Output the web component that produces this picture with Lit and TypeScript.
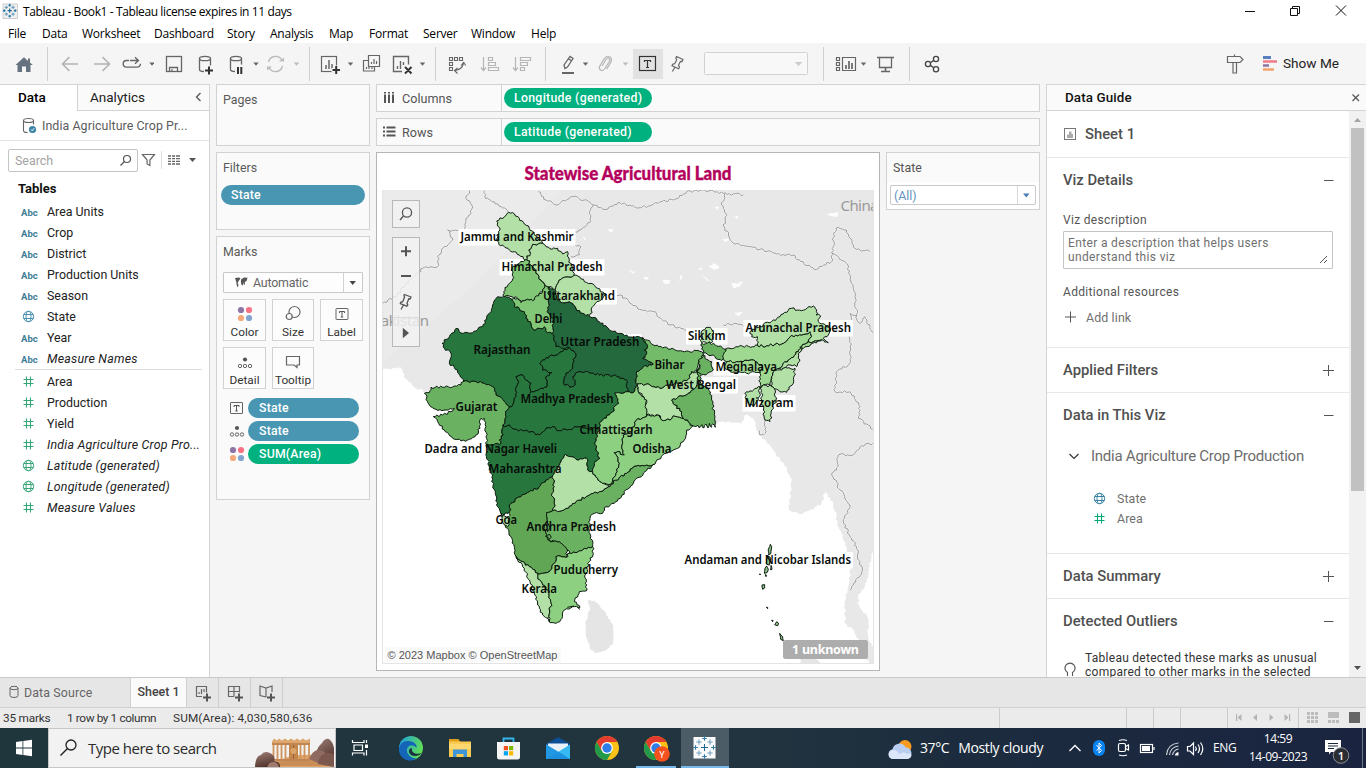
import { LitElement, html, svg, css } from "lit";
import { customElement } from "lit/decorators.js";

type Pt = [number, number];

/* ---------- geometry helpers ---------- */

const parse = (s: string): Pt[] =>
  s.trim().split(/\s+/).map((p) => p.split(",").map(Number) as Pt);

/* Deterministic coastline noise: an edge gives the same wiggle from either end. */
const wiggle = (a: Pt, b: Pt, amp: number): Pt[] => {
  const flip = a[0] > b[0] || (a[0] === b[0] && a[1] > b[1]);
  const [p, q] = flip ? [b, a] : [a, b];
  const len = Math.hypot(q[0] - p[0], q[1] - p[1]);
  const n = Math.max(1, Math.round(len / 6));
  const out: Pt[] = [];
  let seed = p[0] * 7.13 + p[1] * 3.71 + q[0] * 1.37 + q[1] * 5.91;
  for (let i = 1; i < n; i++) {
    seed = (seed * 16.807 + 11.3) % 997;
    const off = (seed / 997 - 0.5) * 2 * amp;
    const t = i / n;
    out.push([
      p[0] + (q[0] - p[0]) * t + (-(q[1] - p[1]) / len) * off,
      p[1] + (q[1] - p[1]) * t + ((q[0] - p[0]) / len) * off,
    ]);
  }
  return flip ? out.reverse() : out;
};

const outline = (s: string, closed: boolean, amp = 4): string => {
  const pts = parse(s);
  const all: Pt[] = [];
  const last = closed ? pts.length : pts.length - 1;
  for (let i = 0; i < last; i++) {
    const a = pts[i];
    const b = pts[(i + 1) % pts.length];
    all.push(a, ...wiggle(a, b, amp));
  }
  if (!closed) all.push(pts[pts.length - 1]);
  return "M" + all.map((p) => p[0].toFixed(1) + " " + p[1].toFixed(1)).join("L") + (closed ? "Z" : "");
};

/* ---------- map data ---------- */

const SEA =
  "18,658 75,655 85,685 120,715 150,725 250,700 500,900 800,850 950,826 1017,830 1030,815 1062,815 1097,822 1107,795 1132,805 1142,840 1172,880 1212,925 1242,980 1247,1020 1237,1080 1272,1092 1302,1080 1337,1060 1347,1025 1372,1060 1387,1130 1412,1190 1422,1260 1417,1310 1407,1350 1407,1420 1432,1440 1462,1500 1480,1545 18,1545";
const GULF = "1500,1180 1485,1215 1480,1260 1465,1310 1447,1340 1450,1370 1475,1400 1480,1470 1500,1500";
const LANKA =
  "635,1350 655,1352 690,1390 712,1430 712,1480 690,1500 660,1510 645,1500 630,1460 628,1420 642,1375";
const SUMATRA = "1272,1545 1275,1520 1320,1528 1345,1545";

const BORDERS = [
  "280,122 270,145 287,165 285,190 270,205 268,230 262,240 215,240 230,270 205,290 188,315 185,350 140,355 120,375 90,400 60,440 20,460",
  "325,122 328,145 355,155 375,170 398,187",
  "487,125 510,150 540,165 590,140 625,150 652,165 640,190 645,215 615,240 595,250 590,280 615,290 610,315 585,320",
  "652,165 690,178 732,158 777,172 822,168 852,155 892,150 932,125 1002,122 1042,130 1102,135",
  "1047,130 1037,165 1050,190 1044,230 1072,280 1132,292 1202,312 1252,315 1287,345 1322,358 1342,345 1367,335 1372,290 1372,250 1387,232 1412,240 1422,265 1437,295 1482,305",
  "1367,310 1412,340 1422,375 1437,440 1442,500 1422,490 1424,600 1422,640 1382,665 1377,725 1422,725 1452,770 1447,805 1490,838",
  "1437,500 1452,520 1467,500 1490,548",
  "690,430 732,435 792,478 832,485 882,525 932,540",
  "1042,525 1080,520 1122,535",
  "1490,880 1452,890 1432,915 1387,915 1382,960 1367,970 1392,1020 1422,1065 1402,1115 1422,1160 1442,1190 1447,1230 1460,1260 1422,1320",
  "1167,810 1167,850 1152,855 1150,842",
];

const LAKES = [
  "620,260 633,268 625,271", "695,238 713,236 707,248", "1072,200 1086,196 1084,208", "1353,192 1372,190 1388,186 1384,200 1366,198",
  "757,361 780,366 770,371", "860,390 884,390 880,401 866,402", "906,400 914,374 920,380", "975,374 999,390 994,394",
  "997,350 1014,338 1031,352 1014,361", "1065,400 1084,402 1101,394 1090,410 1072,415", "802,382 818,382 812,390",
  "1037,268 1060,266 1050,277", "966,354 979,352 976,361", "1075,488 1098,486 1087,500", "50,655 76,652 74,662 58,664", "1015,172 1030,170 1026,180",
];

const PALE = "#b3e0a6";
const DEEP = "#27763d";
const MID = "#6ab161";
const SOFT = "#8ed082";

const STATES: [string, string][] = [
  [DEEP, "408,448 385,437 365,440 350,465 340,490 320,530 290,548 262,550 240,535 220,560 198,580 205,595 225,610 220,640 245,660 258,685 262,695 300,695 325,700 350,710 360,735 385,755 400,770 410,765 420,740 425,690 420,680 440,675 465,700 462,730 480,722 512,712 510,680 528,668 500,660 492,640 500,630 550,608 580,592 540,590 528,550 515,548 505,530 490,535 480,540 470,535 465,520 450,505 445,485 430,475 415,470"],
  [DEEP, "580,592 600,612 590,640 585,660 570,670 563,700 582,712 597,705 590,680 600,668 640,668 670,675 700,675 730,680 755,695 755,725 735,730 715,730 728,760 700,795 675,815 665,835 640,838 610,830 580,838 550,842 530,830 510,835 495,850 480,855 465,845 440,842 415,838 400,825 385,830 380,825 390,800 388,785 400,770 410,765 420,740 425,690 420,680 440,675 465,700 462,730 480,722 512,712 510,680 528,668 500,660 492,640 500,630 550,608"],
  ["#24693d", "520,410 540,425 545,450 560,458 580,455 600,475 620,490 640,497 670,515 700,540 735,550 770,562 800,565 815,590 805,600 812,612 800,625 832,642 802,650 782,665 780,685 784,705 772,728 755,725 755,695 730,680 700,675 670,675 640,668 600,668 590,680 597,705 582,712 563,700 570,670 585,660 590,640 600,612 580,592 560,595 540,590 528,550 533,520 530,505 517,490 517,455"],
  [MID, "262,695 300,695 325,700 350,710 360,735 385,755 400,770 388,785 390,800 380,825 382,855 370,870 375,880 360,880 345,885 332,885 330,860 330,830 325,805 315,805 312,835 300,855 275,870 255,873 230,865 205,840 185,815 172,800 200,795 225,785 235,775 210,780 180,778 160,765 145,730 160,728 165,712 200,712 235,708 255,705"],
  [DEEP, "380,825 385,830 400,825 415,838 440,842 465,845 480,855 495,850 510,835 530,830 550,842 580,838 610,830 640,838 665,835 660,865 660,900 672,925 655,940 650,965 640,965 632,940 632,925 600,928 568,913 555,935 545,955 530,977 510,990 490,1010 460,1025 435,1040 405,1060 400,1085 385,1095 375,1092 365,1070 358,1030 345,970 335,930 330,885 345,885 360,880 375,880 370,870 382,855"],
  ["#60a655", "530,977 535,1010 528,1030 535,1060 530,1082 512,1088 515,1115 505,1130 510,1160 525,1175 550,1175 575,1200 570,1222 540,1220 535,1240 520,1265 500,1270 485,1270 460,1250 440,1235 420,1220 415,1190 405,1160 395,1135 385,1120 398,1100 400,1085 405,1060 435,1040 460,1025 490,1010 510,990"],
  [PALE, "375,1092 385,1098 398,1100 395,1130 385,1125 378,1105"],
  [MID, "512,1088 530,1082 545,1085 570,1075 590,1060 610,1050 640,1035 670,1025 690,1015 705,1002 732,980 752,970 777,948 792,948 812,945 837,942 807,965 772,1000 738,1035 715,1060 690,1070 680,1090 655,1090 642,1105 640,1140 650,1190 620,1200 600,1208 580,1210 575,1200 550,1175 525,1175 510,1160 505,1130 515,1115"],
  [PALE, "568,913 600,928 632,925 632,940 640,965 650,965 665,985 680,1000 700,1005 690,1015 670,1025 640,1035 610,1050 590,1060 570,1075 545,1085 530,1082 535,1060 528,1030 535,1010 530,977 545,955 555,935"],
  [SOFT, "650,1190 652,1210 640,1235 630,1270 628,1300 632,1322 610,1325 595,1355 612,1372 590,1370 565,1380 558,1405 540,1420 522,1418 518,1400 525,1360 515,1320 500,1305 485,1280 485,1270 500,1270 520,1265 535,1240 540,1220 570,1222 580,1210 600,1208 620,1200"],
  [PALE, "420,1220 440,1235 460,1250 485,1270 485,1280 500,1305 515,1320 525,1360 518,1400 520,1416 500,1395 485,1365 475,1330 460,1290 440,1250 425,1230"],
  [SOFT, "715,730 735,730 755,725 772,728 784,705 787,725 807,745 810,770 812,795 805,802 780,812 765,845 742,855 737,890 745,915 725,905 715,908 730,940 720,970 705,1002 680,1000 665,985 650,965 655,940 672,925 660,900 660,865 665,835 675,815 700,795 728,760"],
  [SOFT, "812,795 850,798 857,810 882,810 892,797 922,805 950,828 932,840 925,870 905,895 870,910 840,935 837,942 812,945 792,948 777,948 752,970 732,980 705,1002 720,970 730,940 715,908 725,905 745,915 737,890 742,855 765,845 780,812 805,802"],
  ["#73bb69", "800,562 832,585 882,598 932,603 977,605 982,615 967,640 962,665 947,665 937,688 907,700 882,705 852,715 822,705 784,702 780,685 782,665 802,650 832,642 800,625 812,612 805,600 815,590"],
  [PALE, "784,702 822,705 852,715 882,705 907,700 937,688 947,665 964,665 964,690 957,715 932,735 887,750 897,765 917,785 922,805 892,797 882,810 857,810 847,795 812,795 807,770 812,750 787,725"],
  [MID, "887,750 932,735 957,715 967,690 964,665 972,645 967,630 982,615 997,630 1007,635 1012,660 994,670 972,680 977,705 997,715 1007,750 1017,800 1018,832 1010,822 1006,832 1000,820 996,834 990,822 984,834 978,824 970,834 966,826 952,828 922,805 917,785 897,765"],
  [MID, "977,580 1012,580 1050,597 1047,615 1037,632 1017,620 982,608"],
  [PALE, "980,540 1002,532 1012,545 1010,575 977,578"],
  ["#9fd991", "1050,597 1080,590 1130,590 1145,587 1172,587 1222,580 1242,560 1277,555 1302,545 1307,560 1292,580 1277,590 1267,605 1237,630 1210,655 1197,660 1187,680 1182,705 1162,705 1152,715 1152,670 1157,645 1132,630 1082,635 1052,635 1042,625"],
  ["#a2da94", "1052,635 1082,635 1132,630 1157,645 1152,668 1112,670 1062,665 1046,655"],
  [PALE, "1127,560 1122,545 1152,530 1192,510 1212,500 1247,475 1277,482 1312,468 1322,480 1320,495 1334,498 1327,515 1352,530 1364,535 1357,555 1342,565 1357,578 1337,570 1312,575 1292,580 1307,560 1302,545 1277,555 1242,560 1222,580 1172,587 1145,587 1144,560"],
  ["#a2da94", "1337,570 1312,575 1292,580 1277,590 1270,605 1285,592 1310,580"],
  [PALE, "1272,590 1267,605 1237,630 1210,655 1222,655 1242,645 1262,650 1272,630 1267,610 1277,600"],
  [PALE, "1197,660 1222,655 1257,655 1252,700 1232,727 1207,720 1184,710 1187,680"],
  [PALE, "1157,710 1182,705 1197,720 1200,750 1187,780 1182,815 1167,810 1162,780 1157,750"],
  [PALE, "1107,730 1137,715 1152,710 1150,740 1132,770 1117,760"],
  ["#82c677", "447,330 452,325 465,345 480,370 495,390 505,402 500,425 485,440 470,452 455,448 435,458 425,445 408,440 385,440 383,425 400,400 413,382 408,355 430,340"],
  ["#82c677", "408,448 425,445 435,458 455,448 470,452 500,425 505,402 520,410 517,455 517,490 530,505 533,520 528,550 515,548 505,530 490,535 480,540 470,535 465,520 450,505 445,485 430,475 415,470"],
  [PALE, "500,280 510,290 528,298 545,295 560,312 575,305 580,330 595,370 585,382 565,382 550,390 538,418 520,410 505,402 495,390 480,370 465,345 452,325 463,310 458,300 470,283"],
  [PALE, "362,213 385,200 398,187 410,188 430,205 445,222 460,235 480,258 500,280 470,283 458,300 463,310 447,330 430,315 415,305 400,300 385,290 368,283 362,255 372,240"],
  [PALE, "538,418 550,390 565,382 585,382 600,375 625,395 645,400 665,415 690,435 675,450 655,465 640,497 620,490 600,475 580,455 560,458 545,450 540,425"],
];

const ISLANDS = [
  "1183,1183 1187,1190 1185,1210 1178,1215 1177,1198", "1178,1218 1184,1225 1180,1245 1172,1243 1172,1228", "1172,1248 1177,1258 1173,1268 1165,1270 1167,1255",
  "1185,1246 1188,1258 1184,1260", "1158,1305 1166,1304 1166,1314 1160,1318", "1168,1274 1171,1275 1170,1280", "1150,1272 1153,1272 1153,1275",
  "1171,1372 1175,1372 1175,1376", "1187,1411 1191,1411 1190,1415", "1196,1424 1202,1415 1208,1420 1205,1427", "1211,1450 1220,1460 1222,1472 1214,1468",
];

/* text, left, baseline, width, backed by a white plate */
const LABELS: [string, number, number, number, boolean][] = [
  ["Jammu and Kashmir", 460.5, 241, 113, true],
  ["Himachal Pradesh", 501.5, 271, 101, true],
  ["Uttarakhand", 543, 300, 72, true],
  ["Delhi", 534.5, 323, 28, false],
  ["Uttar Pradesh", 560.5, 346, 79, true],
  ["Rajasthan", 473.5, 354, 57, false],
  ["Bihar", 654.5, 369, 30, false],
  ["Sikkim", 688, 340, 37.5, true],
  ["Arunachal Pradesh", 745.5, 332, 105.5, true],
  ["Meghalaya", 715.5, 371, 61.5, true],
  ["West Bengal", 666, 389, 70, true],
  ["Mizoram", 744.5, 407, 49, true],
  ["Gujarat", 455.5, 411, 42, false],
  ["Madhya Pradesh", 520.5, 403, 93, false],
  ["Chhattisgarh", 579.5, 434, 73, false],
  ["Odisha", 632.5, 453, 39, false],
  ["Dadra and Nagar Haveli", 424.5, 453, 132.5, false],
  ["Maharashtra", 488.5, 473, 73, false],
  ["Goa", 495.5, 524, 21.5, false],
  ["Andhra Pradesh", 526.5, 531, 89.5, false],
  ["Puducherry", 553.5, 574, 64.5, false],
  ["Kerala", 521.5, 593, 35.5, false],
  ["Andaman and Nicobar Islands", 684.5, 564, 166.5, true],
];

/* A bar slice: artwork is authored in window coordinates. */
const slice = (x: number, y: number, w: number, h: number, art: unknown) =>
  html`<svg class="slice" width=${w} height=${h} viewBox="${x} ${y} ${w} ${h}">${art}</svg>`;

const drop = (x: number, y: number, c = "#666") => svg`<path d="M${x - 2.7} ${y - 1.5}h5.4l-2.7 3.2z" fill=${c}/>`;

const globe = (c: string) => html`<svg width="13" height="13" viewBox="0 0 13 13" fill="none" stroke=${c}>
  <circle cx="6.5" cy="6.5" r="5.2"/><ellipse cx="6.5" cy="6.5" rx="2.5" ry="5.2"/><path d="M1.8 4.5h9.4M1.8 8.5h9.4"/></svg>`;
const hash = (c: string) => html`<svg width="13" height="13" viewBox="0 0 13 13" fill="none" stroke=${c} stroke-width="1.1">
  <path d="M4.5 1.5v10M8.5 1.5v10M1.5 4.5h10M1.5 8.5h10"/></svg>`;

const spark = (cx: number, cy: number, s: number, k = 0.12) => {
  const plus = (x: number, y: number, r: number, c: string) =>
    svg`<path d="M${x - r} ${y}h${2 * r}M${x} ${y - r}v${2 * r}" stroke=${c} stroke-width=${s * k}/>`;
  return svg`${plus(cx, cy, s * 0.3, "#1f6a94")}
    ${[[0, -0.78], [0, 0.78], [-0.78, 0], [0.78, 0]].map(([a, b]) => plus(cx + a * s, cy + b * s, s * 0.2, "#2f7ba5"))}
    ${[[-0.48, -0.48], [0.48, -0.48], [-0.48, 0.48], [0.48, 0.48]].map(([a, b]) => plus(cx + a * s, cy + b * s, s * 0.23, "#6d9fbd"))}`;
};

const dots = (x: number, y: number) => svg`
  <circle cx=${x - 4} cy=${y - 4} r="3.1" fill="#8d74a5"/><circle cx=${x + 4} cy=${y - 4} r="3.1" fill="#fb7185"/>
  <circle cx=${x - 4} cy=${y + 4} r="3.1" fill="#f5a97b"/><circle cx=${x + 4} cy=${y + 4} r="3.1" fill="#82a5cf"/>`;
const detail = svg`<circle cx="8" cy="3" r="2.1" fill="#555"/><g fill="none" stroke="#666"><circle cx="3" cy="9.5" r="1.7"/><circle cx="8" cy="9.5" r="1.7"/><circle cx="13" cy="9.5" r="1.7"/></g>`;
const label = svg`<rect x="1.5" y=".5" width="12" height="11" rx=".5" fill="none" stroke="#666"/><path d="M5 5V3.5h5V5M7.500 3.500v5.500M6.300 9h2.400" fill="none" stroke="#555"/>`;

const chrome = (cx: number, cy: number) => svg`<g transform="translate(${cx} ${cy})">
  <circle r="12" fill="#fbc116"/>
  <path d="M-10.400 -6A12 12 0 0 1 10.400 -6L0 -6L-5.200 3z" fill="#e33b2e"/>
  <path d="M-10.400 -6A12 12 0 0 0 0 12L5.200 3L-5.200 3z" fill="#229a4a"/>
  <circle r="5.900" fill="#fff"/><circle r="4.700" fill="#2f7de9"/></g>`;

const ABC = "abc", GEO = "geo", NUM = "num";
const DIMENSIONS: [string, string, boolean?][] = [
  [ABC, "Area Units"], [ABC, "Crop"], [ABC, "District"], [ABC, "Production Units"],
  [ABC, "Season"], [GEO, "State"], [ABC, "Year"], [ABC, "Measure Names", true],
];
const MEASURES: [string, string, boolean?][] = [
  [NUM, "Area"], [NUM, "Production"], [NUM, "Yield"], [NUM, "India Agriculture Crop Pro...", true],
  [GEO, "Latitude (generated)", true], [GEO, "Longitude (generated)", true], [NUM, "Measure Values", true],
];

/* ---------- map ---------- */

@customElement("crop-map")
class CropMap extends LitElement {
  static styles = css`
    :host { display: block; }
    svg { display: block; }
    text { font-family: "Noto Sans", "Open Sans", sans-serif; }
    .name { font-size: 12px; font-weight: 600; fill: #060a08; }
    .place { font-size: 15px; fill: #999; }
    .credit { font: 11.4px "Liberation Sans", Arial, sans-serif; fill: #555; }
    .unknown { font-size: 12.5px; font-weight: 700; fill: #fff; }
  `;
  render() {
    return html`<svg width="492" height="474" viewBox="382 190 492 474">
      <rect x="382" y="190" width="492" height="474" fill="#e8e8e8"/>
      <g transform="translate(376 150) scale(.33333)">
        <path d="M18 120H560L300 400 18 640Z" fill="#ebebeb"/>
        ${[SEA, GULF].map((s) => svg`<path d=${outline(s, true, 4)} fill="#fff"/>`)}
        ${[LANKA, SUMATRA].map((s) => svg`<path d=${outline(s, true, 2)} fill="#e5e5e5"/>`)}
        ${LAKES.map((s) => svg`<path d=${outline(s, true, 2)} fill="#fdfdfd"/>`)}
        ${BORDERS.map((s) => svg`<path d=${outline(s, false, 4)} fill="none" stroke="#f4f4f4" stroke-width="6"/>`)}
        ${BORDERS.map((s) => svg`<path d=${outline(s, false, 4)} fill="none" stroke="#939393" stroke-width="2.8"/>`)}
      </g>
      <text class="place" x="840.5" y="211" textLength="38">China</text>
      <text class="place" x="372" y="326" textLength="57">Pakistan</text>
      ${LABELS.filter((l) => l[4]).map(([, x, y, w]) => svg`<rect x=${x - 2} y=${y - 12} width=${w + 4} height="16.5" fill="#fff"/>`)}
      <g transform="translate(376 150) scale(.33333)" stroke="#0b1a0e" stroke-width="3" stroke-linejoin="round">
        ${STATES.map(([c, s]) => svg`<path d=${outline(s, true)} fill=${c}/>`)}
        ${ISLANDS.map((s) => svg`<path d=${outline(s, true, 1)} fill="#8bbf86"/>`)}
        <path d="M512 1160l8 -8 6 10 -8 6 6 8 8 -6M516 1120l6 14 -8 12M972 645l-8 20 12 8M574 1372l20 -4M604 1372l8 6" fill="none"/>
      </g>
      ${LABELS.map(([t, x, y, w]) => svg`<text class="name" x=${x} y=${y} textLength=${w} lengthAdjust="spacingAndGlyphs">${t}</text>`)}
      <g fill="#f3f3f3" fill-opacity=".8" stroke="#b8b8b8">
        <rect x="392.5" y="200.5" width="27" height="27"/><rect x="392.5" y="237.5" width="27" height="109"/>
      </g>
      <path d="M393 317.500h26" stroke="#ddd"/>
      <g fill="none" stroke="#555" stroke-width="1.3">
        <circle cx="407" cy="212.5" r="4.600"/><path d="M403.500 216l-3.500 4"/>
        <path d="M401 251.200h10M406 246.200v10M401 276h10" stroke-width="2"/>
        <path d="M404.500 294.500l6.500 2.500-1 2-1.200-.2-1.800 4.500.8 1.900-1 1-6.500-2.500.4-1.400 2-.6 1.900-4.700-.7-1.500zM403.500 305l-2.500 4.500"/>
      </g>
      <path d="M402.800 327.800v10.400l6.200-5.200z" fill="#555"/>
      <rect x="385" y="647" width="176" height="15" fill="#fafafa"/>
      <text class="credit" x="387.500" y="659" textLength="170" lengthAdjust="spacingAndGlyphs">© 2023 Mapbox © OpenStreetMap</text>
      <rect x="783" y="640" width="85" height="19" rx="2.5" fill="#adadad"/>
      <text class="unknown" x="792" y="654" textLength="67">1 unknown</text>
      <path d="M382.500 190V663.500H873.500V190" fill="none" stroke="#e4e4e4"/>
    </svg>`;
  }
}

/* ---------- application ---------- */

@customElement("app-root")
class AppRoot extends LitElement {
  static styles = css`
    :host { display: flex; flex-direction: column; width: 1366px; height: 768px; overflow: hidden; background: #fff;
      font: 12.4px Roboto, "Open Sans", sans-serif; color: #333; }
    * { box-sizing: border-box; }
    svg { display: block; flex: none; }
    span { white-space: nowrap; }
    .segoe { font-family: "Open Sans", "Noto Sans", sans-serif; }

    .title { height: 24px; display: flex; align-items: center; color: #000; font-size: 12px; letter-spacing: -0.39px; }
    .title .text { flex: 1; padding: 0 0 2px 5px; }
    .menu { height: 19px; display: grid; color: #000; font-size: 12px; letter-spacing: -0.22px; padding-left: 8px; align-items: center;
      grid-template-columns: 34px 40px 72px 73px 43px 59px 40px 54px 48px 60px 40px; }
    .toolbar { height: 41px; display: flex; background: #f5f5f5; }
    .showme { width: 83px; padding-left: 3px; line-height: 41px; font-size: 13.6px; color: #222; }

    .main { height: 593px; display: flex; background: #f5f5f5; }
    .data { width: 210px; background: #fff; border-right: 1px solid #d4d4d4; border-top: 1px solid #d4d4d4; }
    .tabs { display: flex; height: 26px; line-height: 25px; color: #222; font-size: 13.5px; }
    .tabs .on { width: 77px; padding-left: 18px; font-weight: 500; color: #000; }
    .tabs .off { flex: 1; display: flex; justify-content: space-between; padding-left: 12px; background: #fafafa; border: solid #d4d4d4; border-width: 0 0 1px 1px; }
    .source { height: 30px; display: flex; align-items: center; border-bottom: 1px solid #e2e2e2; color: #5c5c5c; font-size: 12.4px; letter-spacing: 0.07px; }
    .find { display: flex; padding: 8px 0 0 8px; height: 36px; }
    .search { width: 130px; height: 23px; border: 1px solid #c4c4c4; border-radius: 2px; display: flex; align-items: center; padding-left: 6px; color: #a3a3a3; justify-content: space-between; }
    .heading { padding-left: 18px; height: 24px; line-height: 23px; font-weight: 700; font-size: 13px; color: #111; }
    .field { display: grid; grid-template-columns: 16px 1fr; column-gap: 10px; padding-left: 21px; height: 21px; align-items: center; color: #222; }
    .field .abc { font-size: 9.5px; font-weight: 700; color: #3f7d96; padding-top: 2px; }
    .field .glyph { padding-left: 1px; }
    .it { font-style: italic; letter-spacing: 0.22px; }
    .rule { height: 1px; background: #dcdcdc; margin: 0 7px 0 15px; }
    .below { padding-top: 1px; }

    .shelves { width: 154px; margin-left: 6px; display: flex; flex-direction: column; gap: 6px; color: #5a5a5a; }
    .card { border: 1px solid #d2d2d2; background: #fafafa; }
    .card .cap { display: block; padding: 7px 6px 0; height: 25px; line-height: 16px; }
    .pages { height: 62px; }
    .filters { height: 78px; }
    .marks { height: 264px; }
    .pill { height: 20px; line-height: 20px; border-radius: 10px; padding-left: 11px; color: #fff; background: #4996b2; font-size: 12.3px; font-weight: 500; letter-spacing: 0.2px; }
    .green { background: #00b180; }
    .filters .pill { margin: 7px 4px 0; padding-left: 10px; }
    .kind { margin: 10px 6px 6px; height: 21px; display: flex; align-items: center; border: 1px solid #c9c9c9; border-radius: 1px; color: #666; background: #fdfdfd; justify-content: space-between; letter-spacing: -0.2px; }
    .kind span { flex: 1; }
    .buttons { display: grid; grid-template-columns: 43px 42px 43px; gap: 6px; padding: 0 6px; color: #333; font-size: 11.8px; }
    .btn { height: 42px; border: 1px solid #d2d2d2; background: #fcfcfc; display: flex; flex-direction: column; align-items: center; justify-content: space-between; padding: 5px 0 1px; line-height: 14px; }
    .rows { display: flex; flex-direction: column; gap: 3px; padding: 9px 10px 0 12px; }
    .enc { display: flex; gap: 3px; align-items: center; }
    .enc .pill { flex: 1; }

    .center { width: 664px; margin-left: 6px; display: flex; flex-direction: column; gap: 6px; }
    .shelf { height: 28px; display: flex; align-items: center; color: #555; }
    .shelf .lead { width: 125px; height: 100%; border-right: 1px solid #d2d2d2; display: flex; align-items: center; font-size: 12.6px; }
    .shelf .pill { width: 148px; margin-left: 2px; letter-spacing: 0.3px; padding-left: 10px; }
    .below-shelves { display: flex; gap: 6px; align-items: flex-start; }
    .viz { width: 504px; height: 519px; border: 1px solid #b5b5b5; background: #fff; padding: 0 5px; }
    .viz .name { display: block; height: 37px; }
    .viz .name text { font-family: Lato, sans-serif; font-weight: 900; font-size: 18.5px; fill: #b4005c; stroke: #b4005c; stroke-width: 0.35px; }
    .quick { width: 154px; height: 58px; background: #fff; }
    .quick .cap { background: #fafafa; height: 29px; color: #555; padding-top: 7px; }
    .quick .sel { margin: 3px 3px 0; height: 20px; border: 1px solid #c9c9c9; border-radius: 2px; display: flex; align-items: center; color: #6592bd; padding-left: 3px; justify-content: space-between; }

    .guide { width: 320px; margin-left: 6px; border-left: 1px solid #d4d4d4; border-top: 1px solid #d4d4d4; background: #fff; display: flex; flex-direction: column; overflow: hidden; }
    .ghead { height: 26px; flex: none; background: #fafafa; border-bottom: 1px solid #d4d4d4; padding-left: 18px; display: flex; align-items: center; justify-content: space-between; color: #111; font-weight: 500; font-size: 13.4px; letter-spacing: 0.1px; }
    .gbody { flex: 1; display: flex; min-height: 0; }
    .sections { width: 302px; overflow: hidden; color: #555; }
    .sec { border-bottom: 1px solid #e8e8e8; padding: 0 10px 0 16px; overflow: hidden; }
    .sec .h { height: 44px; display: flex; align-items: center; justify-content: space-between; font-size: 14.8px; font-weight: 500; color: #505050; }
    .s0 { height: 47px; } .s1 { height: 190px; } .s2 { height: 45px; } .s3 { height: 161px; } .s4 { height: 45px; } .s5 { height: 90px; border: 0; }
    .sec.s0 .h { height: 46px; justify-content: flex-start; gap: 8px; }
    .wide { font-size: 12px; letter-spacing: 0.32px; line-height: 16px; display: block; }
    .desc { padding-top: 10px; }
    .area { width: 270px; height: 38px; margin: 3px 0 15px; border: 1px solid #c4c4c4; padding: 5px 4px 4px; color: #6f6f6f; display: flex; justify-content: space-between; align-items: flex-end; border-radius: 1px; }
    .area .wide { line-height: 14px; letter-spacing: 0.35px; }
    .note .wide { line-height: 14px; letter-spacing: 0.27px; }
    .link { display: flex; align-items: center; gap: 9px; margin-top: 10px; height: 14px; color: #707070; letter-spacing: 0.12px; }
    .ds { display: flex; align-items: center; height: 20px; margin-top: 9px; padding-left: 5px; gap: 11px; font-size: 15px; letter-spacing: -0.25px; color: #6c6c6c; }
    .leaf { display: flex; align-items: center; height: 20px; padding-left: 30px; gap: 11px; color: #707070; letter-spacing: 0.1px; }
    .first { margin-top: 22px; }
    .note { display: flex; gap: 9px; padding-top: 8px; color: #333; }
    .scroll { width: 17px; background: #f1f1f1; display: flex; flex-direction: column; align-items: center; }
    .thumb { width: 13px; height: 363px; background: #c1c1c1; }
    .fill { flex: 1; }

    .sheets { height: 30px; display: flex; background: #e6e6e6; border-top: 1px solid #c9c9c9; color: #666; font-size: 12.4px; line-height: 28px; }
    .dsrc { width: 130px; display: flex; letter-spacing: 0.12px; padding-top: 1px; }
    .sheet { width: 57px; border: solid #d0d0d0; border-width: 0 1px; background: #fafafa; text-align: center; font-weight: 500; color: #444; }
    .status { height: 21px; display: flex; background: #ebebeb; border-top: 1px solid #d0d0d0; line-height: 21px; font-size: 11.8px; color: #333; }
    .status .a { width: 67px; padding-left: 3px; letter-spacing: -0.2px; } .status .b { width: 106px; letter-spacing: -0.38px; } .status .c { flex: 1; letter-spacing: 0.13px; }

    .taskbar { height: 40px; display: flex; background: linear-gradient(90deg, #20363d, #21343f 55%, #1c2c3e 70%, #1a2440); color: #fff; }
    .wsearch { width: 288px; background: #f2f2f2; border: 1px solid #c6c6c6; display: flex; align-items: center; color: #2b2b2b; font-size: 15px; letter-spacing: -0.5px; }
    .wsearch span { flex: 1; }
    .weather { width: 148px; padding-left: 4px; line-height: 40px; font-size: 14px; letter-spacing: -0.38px; display: flex; gap: 9px; }
    .eng { width: 32px; line-height: 39px; font-size: 12px; letter-spacing: -0.4px; }
    .clock { width: 66px; text-align: center; font-size: 12px; letter-spacing: -0.45px; line-height: 18px; padding-top: 2px; display: flex; flex-direction: column; }
  `;

  private field([kind, name, calc]: [string, string, boolean?], tone: string) {
    const mark = kind === ABC ? html`<span class="abc">Abc</span>` : html`<span class="glyph">${kind === GEO ? globe(tone) : hash(tone)}</span>`;
    return html`<div class="field">${mark}<span class=${calc ? "it" : ""}>${name}</span></div>`;
  }

  private toolbar() {
    const seps = (x: number) => svg`<path d="M${x} 47v34" stroke="#d0d0d0"/>`;
    return html`<div class="toolbar">
      ${slice(0, 43, 48, 41, svg`<path d="M15.500 65L24 57.300 28 61V58.500h2V62.600L32.800 65H30.500V72H26V66.500H22V72H17.500V65Z" fill="#667280"/>${seps(47.5)}`)}
      ${slice(48, 43, 106, 41, svg`<g fill="none" stroke="#b3b3b3" stroke-width="1.6"><path d="M78 64H63M69.500 57L62.500 64l7 7M94 64h15M102.500 57l7 7-7 7"/>
        <path stroke="#666" stroke-width="1.4" d="M129 60.500H126.500a3.300 3.300 0 0 0 0 6.600H137a3.300 3.300 0 0 0 3.500-3.300M130 60.500H138M135 57.300l3.400 3.200-3.400 3.200"/></g>${drop(152, 64)}`)}
      ${slice(154, 43, 156, 41, svg`<g fill="none" stroke="#666" stroke-width="1.3"><rect x="166.5" y="56.5" width="15" height="15"/><path d="M169.500 71.500v-4h8v4M172 71v-1.800"/>
        <path d="M199.500 58.500v11q0 2 4.500 2M210.500 58.500v7"/><ellipse cx="205" cy="58.5" rx="5.5" ry="2.2"/>
        <path d="M230.500 58.500v11q0 2 4.500 2M241.500 58.500v6"/><ellipse cx="236" cy="58.5" rx="5.5" ry="2.2"/></g>
        <path d="M205 70.500h8M209 66.500v8M238 67v7M241.300 67v7" stroke="#333" stroke-width="2"/>${drop(256, 64)}
        <g fill="none" stroke="#bbb" stroke-width="1.4"><path d="M268.500 62a7.200 7.200 0 0 1 13.500-1.500M282.500 66a7.200 7.200 0 0 1-13.500 1.500"/></g><path d="M279 61.500h5v-4zM272 66.500h-5v4z" fill="#bbb"/>${drop(296.5, 64, "#bbb")}${seps(309.5)}`)}
      ${slice(310, 43, 126, 41, svg`<g fill="none" stroke="#666" stroke-width="1.2"><rect x="321.5" y="56.5" width="15" height="15"/><path d="M326 69v-4M329 69V60M332 69v-5" stroke-width="1.5"/>
        <path d="M368.500 55.500h11v11h-11zM368 60.500h-4.500v10.500h11v-4M366.500 69v-2M369 69v-2M372 69v-2M371.500 64v-2M374 64v-5M376.500 64v-3"/>
        <path d="M402 71.500h-8.500v-15h15v8M397.500 69v-3M400.500 69v-8M403.500 65v-3" stroke-width="1.4"/></g>
        <path d="M331.500 70h9M336 65.500v9" stroke="#f5f5f5" stroke-width="4"/><path d="M332.500 70h7.500M336.200 66v8M405 67l6.500 6.500M411.500 67l-6.500 6.500" stroke="#333" stroke-width="2"/>${drop(350.5, 64)}${drop(422.5, 64)}${seps(435.5)}`)}
      ${slice(436, 43, 110, 41, svg`<g fill="none" stroke="#666" stroke-width="1.1"><path d="M449.500 57.500h3v3h-3zM454.500 57.500h3v3h-3zM459.500 57.500h3v3h-3zM449.500 62.500h3v3h-3zM449.500 67.500h3v3h-3zM455 70.500q7-1 8.500-7M457.500 68l-3 2.500 3 3M461 65.500l2.700-3 2 3"/></g>
        <g fill="none" stroke="#b5b5b5" stroke-width="1.2"><path d="M483.500 57v13M481 67.500l2.500 3 2.500-3M488.500 57.500h4v3h-4zM488.500 62.500h7v3h-7zM488.500 67.500h10v3h-10z"/>
        <path d="M515.500 57v13M513 67.500l2.500 3 2.500-3M520.500 57.500h10v3h-10zM520.500 62.500h7v3h-7zM520.500 67.500h4v3h-4z"/></g>${seps(545.5)}`)}
      ${slice(546, 43, 87, 41, svg`<path d="M565 68.500l-1-3.500 6-8.500 3 2-5.500 8.500zM568 58.500l3 2" fill="none" stroke="#666" stroke-width="1.3"/><path d="M562 73h12" stroke="#666" stroke-width="2"/>${drop(585.5, 64)}
        <path d="M602 66l4-6.500q1.500-2 3-1t.3 3l-4.800 7.500q-2 2.500-4 1t-.7-4l4.500-7.300q2.500-3.500 5.500-1.600t.8 5.500l-4 6.500" fill="none" stroke="#b5b5b5" stroke-width="1.2"/>${drop(625.5, 64, "#bbb")}`)}
      ${slice(633, 43, 190, 41, svg`<rect x="633" y="49" width="30" height="30" fill="#e2e2e2"/><rect x="639.5" y="56.5" width="16" height="14" fill="none" stroke="#333" stroke-width="1.2"/>
        <path d="M644.500 62v-1.500h6v1.500M647.500 60.500v7M646 67.500h3" fill="none" stroke="#333" stroke-width="1.2"/>
        <path d="M676.500 56.500l6.500 3-1 2-1.500-.2-2 4 1 2-1 1.500-6.500-3 .7-1.600 2-.5 2-4-.8-1.600zM674.800 67.500l-2.500 4" fill="none" stroke="#666" stroke-width="1.2"/>
        <rect x="704.5" y="52.5" width="103" height="22" rx="1" fill="#f8f8f8" stroke="#d2d2d2"/><path d="M794.500 62h8l-4 4z" fill="#ccc"/>`)}
      ${slice(823, 43, 87, 41, svg`${seps(823.5)}<g fill="none" stroke="#666" stroke-width="1.2"><path d="M836.500 57.500h3v3h-3zM836.500 62.500h3v3h-3zM836.500 67.500h3v3h-3zM842.500 57.500h13v13h-13z"/></g>
        <path d="M846 69v-4M849 69v-8M852 69v-6" stroke="#666" stroke-width="1.7"/>${drop(863.5, 64)}
        <path d="M877 57.500h17M885.500 68v4M881 71.500h9" stroke="#666" stroke-width="1.6"/><path d="M879.500 58v9.500h12v-9.500" fill="none" stroke="#666" stroke-width="1.3"/>${seps(909.5)}`)}
      ${slice(910, 43, 370, 41, svg`<g fill="none" stroke="#444" stroke-width="1.3"><circle cx="928" cy="64" r="2.600"/><circle cx="936" cy="59" r="2.600"/><circle cx="936" cy="69.3" r="2.600"/><path d="M930.300 62.700l3.500-2.300M930.300 65.400l3.500 2.400"/></g>
        <path d="M1227.500 56.500h12.500l3 3-3 3h-12.500zM1233 62.500v10.500h3.500v-10.500M1234.500 56v-1.500" fill="none" stroke="#666" stroke-width="1.2"/>
        <path d="M1263 57.500h8" stroke="#5a7fc0" stroke-width="3"/><path d="M1263 61.500h14" stroke="#ef7b8b" stroke-width="2.5"/><path d="M1263 65.500h6" stroke="#8d74a5" stroke-width="2.500"/><path d="M1263 69.500h11" stroke="#f2a36e" stroke-width="2.500"/>`)}
      <span class="showme">Show Me</span>
    </div>`;
  }

  private dataPane() {
    return html`<div class="data">
      <div class="tabs"><span class="on">Data</span><div class="off"><span>Analytics</span>
        <svg width="18" height="25" viewBox="0 0 18 25"><path d="M9.500 8L5.500 12l4 4" fill="none" stroke="#555" stroke-width="1.3"/></svg></div></div>
      <div class="source">
        <svg width="42" height="29" viewBox="0 111 42 29"><g fill="none" stroke="#666" stroke-width="1.1"><ellipse cx="28.5" cy="120.5" rx="5" ry="2"/><path d="M23.500 120.500v10q0 2 4 2M33.500 120.500v4"/></g><circle cx="32.5" cy="129.5" r="3.6" fill="#3a83a5"/><path d="M31 129.500l1.200 1.300 2-2.600" fill="none" stroke="#fff"/></svg>
        <span>India Agriculture Crop Pr...</span></div>
      <div class="find"><div class="search"><span>Search</span>
        <svg width="20" height="21" viewBox="0 0 20 21"><circle cx="10" cy="9" r="3.5" fill="none" stroke="#555" stroke-width="1.2"/><path d="M7.500 11.500l-4 4" stroke="#555" stroke-width="1.3"/></svg></div>
        ${slice(138, 149, 64, 23, svg`<path d="M142.500 154.500h12l-4.600 5.500v5.500l-2.800-1.500v-4z" fill="none" stroke="#666" stroke-width="1.2"/><path d="M161.500 151v18" stroke="#ddd"/>
          <path d="M168 156h3M172 156h3M176 156h4M168 158.700h3M172 158.700h3M176 158.700h4M168 161.400h3M172 161.400h3M176 161.400h4M168 164h3M172 164h3M176 164h4" stroke="#666" stroke-width="1.3"/><path d="M189 158h7l-3.500 4z" fill="#555"/>`)}
      </div>
      <div class="heading">Tables</div>
      ${DIMENSIONS.map((f) => this.field(f, "#4a90ae"))}
      <div class="rule"></div>
      <div class="below">${MEASURES.map((f) => this.field(f, "#38a778"))}</div>
    </div>`;
  }

  private shelves() {
    const button = (name: string, art: unknown) => html`<div class="btn"><svg width="20" height="17" viewBox="0 0 20 17">${art}</svg><span>${name}</span></div>`;
    return html`<div class="shelves">
      <div class="card pages"><span class="cap">Pages</span></div>
      <div class="card filters"><span class="cap">Filters</span><div class="pill">State</div></div>
      <div class="card marks"><span class="cap">Marks</span>
        <div class="kind"><svg width="29" height="19" viewBox="0 0 29 19"><path d="M11 5l4-.5 1.500 1-1.500 2-1 1.500-.3 1.500.9 1.500-1 2.500-1-3-.4-3zM17 6.500l3-2 3.500.3-.8 3-2 1.500.3 2-1 .7-.8-2.500-.5 3-1.200-.5-.6-3z" fill="#555"/></svg>
          <span>Automatic</span><svg width="19" height="19" viewBox="0 0 19 19"><path d="M.5 0v19" stroke="#d2d2d2"/><path d="M6.500 8h6.400l-3.200 4z" fill="#444"/></svg></div>
        <div class="buttons">
          ${button("Color", dots(10, 9))}
          ${button("Size", svg`<g fill="#fafafa" stroke="#666" stroke-width="1.2"><circle cx="11.5" cy="7" r="5.5"/><circle cx="6.2" cy="11.5" r="3"/></g>`)}
          ${button("Label", svg`<g transform="translate(2.5 3)">${label}</g>`)}
          ${button("Detail", svg`<g transform="translate(2 3.5)">${detail}</g>`)}
          ${button("Tooltip", svg`<path d="M3.500 3.500h13v8.500h-2.500v2.500l-3-2.500h-7.500z" fill="none" stroke="#666" stroke-width="1.2"/>`)}
        </div>
        <div class="rows">
          <div class="enc"><svg width="16" height="13" viewBox="0 0 16 13">${label}</svg><div class="pill">State</div></div>
          <div class="enc"><svg width="16" height="13" viewBox="0 0 16 13">${detail}</svg><div class="pill">State</div></div>
          <div class="enc"><svg width="16" height="16" viewBox="0 0 16 16">${dots(8, 8)}</svg><div class="pill green">SUM(Area)</div></div>
        </div>
      </div>
    </div>`;
  }

  private center() {
    return html`<div class="center">
      <div class="card shelf"><div class="lead"><svg width="25" height="14" viewBox="0 0 25 14"><path d="M8 1v1.500M12 1v1.500M16 1v1.500M8 3.500v8.500M12 3.500v8.500M16 3.500v8.500" stroke="#555" stroke-width="2"/></svg><span>Columns</span></div><div class="pill green">Longitude (generated)</div></div>
      <div class="card shelf"><div class="lead"><svg width="25" height="14" viewBox="0 0 25 14"><path d="M6 2.500h2M6 6.500h2M6 10.500h2M9.500 2.500h9M9.500 6.500h9M9.500 10.500h9" stroke="#555" stroke-width="1.8"/></svg><span>Rows</span></div><div class="pill green">Latitude (generated)</div></div>
      <div class="below-shelves">
        <div class="viz"><svg class="name" width="492" height="37" viewBox="382 153 492 37"><text x="524.5" y="180" textLength="207" lengthAdjust="spacingAndGlyphs">Statewise Agricultural Land</text></svg><crop-map></crop-map></div>
        <div class="card quick"><span class="cap">State</span><div class="sel"><span>(All)</span><svg width="18" height="18" viewBox="0 0 18 18"><path d="M.5 0v18" stroke="#d8d8d8"/><path d="M6 7.500h6.500l-3.200 4z" fill="#4a7fb5"/></svg></div></div>
      </div>
    </div>`;
  }

  private guide() {
    const minus = html`<svg width="21" height="11" viewBox="0 0 21 11"><path d="M6 5.500h9.500" stroke="#555"/></svg>`;
    const plus = html`<svg width="21" height="11" viewBox="0 0 21 11"><path d="M5 5.500h11M10.500 0v11" stroke="#555"/></svg>`;
    return html`<div class="guide">
      <div class="ghead"><span>Data Guide</span><svg width="18" height="20" viewBox="0 0 18 20"><path d="M4.500 6.500l6.500 6.500M11 6.500l-6.500 6.500" stroke="#555" stroke-width="1.2"/></svg></div>
      <div class="gbody"><div class="sections">
        <div class="sec s0"><div class="h"><svg width="14" height="13" viewBox="0 0 14 13"><rect x="1.5" y=".5" width="11" height="11" fill="none" stroke="#777"/><path d="M4 10V6.500h2V3.500h2.500v2.500H10V10z" fill="#aaa"/></svg><span>Sheet 1</span></div></div>
        <div class="sec s1"><div class="h"><span>Viz Details</span>${minus}</div>
          <span class="wide desc">Viz description</span>
          <div class="area"><span class="wide">Enter a description that helps users<br>understand this viz</span><svg width="9" height="9" viewBox="0 0 9 9"><path d="M1 8L8 1M5 8l3-3" stroke="#555"/></svg></div>
          <span class="wide">Additional resources</span>
          <div class="link"><svg width="14" height="14" viewBox="0 0 14 14"><path d="M2 7h11M7.500 1.500v11" stroke="#555"/></svg><span>Add link</span></div></div>
        <div class="sec s2"><div class="h"><span>Applied Filters</span>${plus}</div></div>
        <div class="sec s3"><div class="h"><span>Data in This Viz</span>${minus}</div>
          <div class="ds"><svg width="12" height="12" viewBox="0 0 12 12"><path d="M1.500 4l4.500 4.500L10.500 4" fill="none" stroke="#333" stroke-width="1.2"/></svg><span>India Agriculture Crop Production</span></div>
          <div class="leaf first">${globe("#3a83a5")}<span>State</span></div><div class="leaf">${hash("#00a878")}<span>Area</span></div></div>
        <div class="sec s4"><div class="h"><span>Data Summary</span>${plus}</div></div>
        <div class="sec s5"><div class="h"><span>Detected Outliers</span>${minus}</div>
          <div class="note"><svg width="13" height="28" viewBox="0 0 13 28"><path d="M4.500 25v-3.500a5 5 0 1 1 5 0v3.500" fill="none" stroke="#555" stroke-width="1.1"/></svg>
          <span class="wide">Tableau detected these marks as unusual<br>compared to other marks in the selected</span></div></div>
      </div>
      <div class="scroll"><svg width="17" height="17" viewBox="0 0 17 17"><path d="M5 11h7l-3.500-4z" fill="#a3a3a3"/></svg><div class="thumb"></div><div class="fill"></div>
        <svg width="17" height="17" viewBox="0 0 17 17"><path d="M5 6h7l-3.500 4z" fill="#505050"/></svg></div></div>
    </div>`;
  }

  private sheets() {
    const add = (x: number, art: unknown) => svg`<g fill="none" stroke="#666" stroke-width="1.2">${art}</g><path d="M${x} 697.500h8M${x + 4} 693.500v8" stroke="#555" stroke-width="2"/>`;
    return html`<div class="sheets"><div class="dsrc"><svg width="24" height="28" viewBox="0 0 24 28"><ellipse cx="14" cy="9" rx="4" ry="1.7" fill="none" stroke="#666"/><path d="M10 9v7.500q0 2 4 2t4-2V9" fill="none" stroke="#666"/></svg><span>Data Source</span></div>
      <div class="sheet">Sheet 1</div>
      ${slice(187, 678, 96, 29, svg`${add(203, svg`<path d="M202 696.500h-5.500v-10h10v6M199 694v-2M201.500 694v-5M204 692v-3"/>`)}${add(235, svg`<path d="M234 696.500h-5.500v-10h11v6M228.500 691.500h11M234 686.500v10"/>`)}${add(267, svg`<path d="M266 697l-6-1.500v-9.500l6 2 6-2v6M266 688v9"/>`)}
        <path d="M218.500 678v30M250.500 678v30M282.500 678v30" stroke="#cdcdcd"/>`)}</div>`;
  }

  private taskbar() {
    return html`<div class="taskbar segoe">
      ${slice(0, 728, 48, 40, svg`<path d="M16 742l6.500-.9v6.500H16zM23.300 741l8.700-1.200v7.800h-8.700zM16 748.500h6.500v6.500l-6.500-.9zM23.300 748.500H32v7.700l-8.700-1.200z" fill="#fff"/>`)}
      <div class="wsearch"><svg width="39" height="38" viewBox="49 729 39 38"><circle cx="71" cy="745" r="5" fill="none" stroke="#222" stroke-width="1.3"/><path d="M67.500 748.500l-7 7" stroke="#222" stroke-width="1.4"/></svg><span>Type here to search</span>
        <svg width="81" height="38" viewBox="255 729 81 38">
          <defs><linearGradient id="rock" x2=".4" y2="1"><stop offset="0" stop-color="#a08078"/><stop offset="1" stop-color="#4e3029"/></linearGradient></defs>
          <path d="M268 767q20-14 45-12l22 4v9z" fill="#dfa56b"/><path d="M270 762l48-3 16 7h-60z" fill="#c98d55"/>
          <path d="M273 741.500l2-3 3 2 2-2 3 2 3-2 3 2 3-2 3 2 3-2 3 2 3-2 3 2 4-2v5h-38z" fill="#dda76e"/>
          <path d="M274.500 744v15M278.500 743v16M282.500 743v17M286.500 743v18M301.500 743v17M305.500 743v16M310 743v16" stroke="#d0945a" stroke-width="1.8"/><path d="M290 743h9v18h-9z" fill="#c5864b"/><path d="M294.500 743v18" stroke="#8a5a33" stroke-width=".8"/><path d="M273 744h38M275 760h35" stroke="#c08550" stroke-width="2"/><circle cx="294.500" cy="751" r="3" fill="#dba66c"/>
          <path d="M316 758q1-10 7-15 3-5 7-4 4 3 5 9v18l-10-3z" fill="url(#rock)"/><path d="M310 759q4-10 11-9t6 8l-8 5z" fill="#8e6a60"/><path d="M319 764q1-10 9-11 5-1 7 2v12z" fill="#7b574e"/>
          <path d="M256 768q0-12 6-13 3-5 9-2 6 3 4 8 7 1 6 7z" fill="url(#rock)"/><path d="M268 768q2-7 7-6t5 6z" fill="#a07c70"/>
        </svg></div>
      ${slice(336, 728, 345, 40, svg`<defs><linearGradient id="edge" x2="1" y2=".3"><stop offset="0" stop-color="#1b9de2"/><stop offset="1" stop-color="#5fdc5a"/></linearGradient></defs>
        <g fill="none" stroke="#fff" stroke-width="1.2"><path d="M352.500 740v2.500h11.500V740M352.500 755.500v-2.500h11.500v2.500M354 745h8.500v5.500H354zM366.500 740v3M366.500 750v5.500"/></g><path d="M365 744.500h3v3.500h-3z" fill="#fff"/>
        <circle cx="411" cy="748" r="12" fill="url(#edge)"/><path d="M399 749q1-8 9-8 8 0 9 7-4-4-8-2-4 3-1 8 3 5 9 4-5 4-10 2-8-2-8-11z" fill="#1464b8"/><path d="M412 748q-1 4 3 5.500 4 1 7-1-2 3-6 3.500-7 0-7-5 0-2.500 3-3z" fill="#1b2f3d"/>
        <path d="M449 739h9l2 2.500h11V757h-22z" fill="#fccb51"/><path d="M449 739h9l2 2.500h-11z" fill="#e09f1d"/><path d="M449 744h22v5h-22z" fill="#ffd970"/><path d="M453 757v-7.500h14V757h-3.500v-3h-7v3z" fill="#3f95d8"/>
        <path d="M503.500 744v-5.500h10v5.500" fill="none" stroke="#35b6ea" stroke-width="1.8"/><path d="M497 742h23v15q0 2.500-2.500 2.500h-18q-2.500 0-2.500-2.500z" fill="#f4f4f4"/><path d="M503.800 746h4.200v4.200h-4.200z" fill="#f25022"/><path d="M509 746h4.200v4.200H509z" fill="#7fba00"/><path d="M503.800 751.200h4.200v4.200h-4.200z" fill="#00a4ef"/><path d="M509 751.200h4.200v4.200H509z" fill="#ffb900"/>
        <path d="M546 744l12-7 12 7v4h-24z" fill="#0d4f97"/><path d="M548 743.500h20v6l-10 4-10-4z" fill="#e9f2f9"/><path d="M546 744.500l12 7.500 12-7.500V759h-24z" fill="#35b9f0"/><path d="M546 744.500V759l12-7.500z" fill="#2298e3"/><path d="M546 759l12-7.500 12 7.500z" fill="#1c8fdd"/>
        ${chrome(607, 748)}${chrome(656, 748)}<circle cx="662" cy="754" r="7.8" fill="#f4511e"/><text x="659.3" y="757.5" font-size="9" font-family="Roboto" fill="#fff">Y</text>
        <path d="M636 766h40v2h-40z" fill="#76b9ed"/>`)}
      ${slice(681, 728, 48, 40, svg`<path d="M681 728h48v40h-48z" fill="#4b5c66"/><path d="M681 766h48v2h-48z" fill="#76b9ed"/><rect x="693.5" y="737" width="22" height="21.500" fill="#fbfbfb"/>${spark(704.5, 747.5, 11.5, 0.09)}`)}
      ${slice(729, 728, 187, 40, svg`<circle cx="905" cy="746.5" r="6.5" fill="#f79a1d"/><path d="M893 759a5 5 0 0 1-.5-9.800 7 7 0 0 1 13-2 6 6 0 0 1 6 6q0 5.500-5 5.800z" fill="#b9cdf0"/><path d="M893 759a4.500 4.500 0 0 1 0-9q5 0 6 4 5-3 8 0 3-2 4.500 1-.5 4-5 4z" fill="#dbe6fa"/>`)}
      <div class="weather"><span>37°C</span><span>Mostly cloudy</span></div>
      ${slice(1064, 728, 149, 40, svg`<path d="M1069.500 751l5.500-5.500 5.500 5.500" fill="none" stroke="#fff" stroke-width="1.3"/><rect x="1093" y="740" width="12" height="16" rx="6" fill="#0a84f0"/><path d="M1096.500 745l5 5.500-2.500 2.500v-10l2.500 2.500-5 5" fill="none" stroke="#fff"/>
        <g fill="none" stroke="#fff" stroke-width="1.2"><rect x="1118.5" y="743.5" width="7" height="8" rx="1.5"/><path d="M1125.500 746.500l3-1.500v5l-3-1.500M1119 740.500q4-1.500 8 0M1119 755q4 1.500 8 0"/><rect x="1140.5" y="744.5" width="12" height="8"/><path d="M1154 747v3"/>
        <path d="M1187.500 746.500h2.500l3.500-3.500v11.500l-3.500-3.500h-2.500zM1195.500 746.500q1.500 2 0 4.500M1198 744.500q3 4 0 8.500M1200.500 742.500q4.500 6 0 12.500"/></g>
        <path d="M1142 746h8v5h-8z" fill="#fff"/><g fill="none" stroke="#c9ced6" stroke-width="1.2"><path d="M1166.500 755q1-11 12-12M1169.500 755q1-8 9-9M1172.500 755q1-5 6-6"/></g><path d="M1175 755.500q0-3 3.500-3.500v3.500z" fill="#fff"/>`)}
      <span class="eng">ENG</span>
      <div class="clock"><span>14:59</span><span>14-09-2023</span></div>
      ${slice(1311, 728, 55, 40, svg`<path d="M1325 740h16v12h-10l-2 2.500V752h-4z" fill="#fff"/><path d="M1328 743.500h10M1328 746h10M1328 748.500h6" stroke="#1c2a3c"/><circle cx="1341" cy="755.5" r="7.800" fill="#2a2e33" stroke="#8b9096"/><text x="1337.8" y="759.5" font-size="11.5" font-weight="600" font-family="Open Sans" fill="#fff">1</text><path d="M1362.500 728v40" stroke="#6d7884"/>`)}
    </div>`;
  }

  render() {
    return html`
      <div class="title segoe">
        ${slice(0, 0, 18, 24, svg`<rect x="3" y="4" width="14.500" height="14.500" fill="#f0f0f0" stroke="#c4c4c4" stroke-width=".8"/>${spark(9.7, 10.7, 7, 0.17)}`)}
        <span class="text">Tableau - Book1 - Tableau license expires in 11 days</span>
        ${slice(1230, 0, 136, 24, svg`<g fill="none" stroke="#111"><path d="M1245 11.500h10M1336 5.500l10 10M1346 5.500l-10 10"/><path d="M1290.500 8.500h7v7h-7zM1292.500 8.500v-2h7v7h-2"/></g>`)}
      </div>
      <div class="menu segoe">${["File", "Data", "Worksheet", "Dashboard", "Story", "Analysis", "Map", "Format", "Server", "Window", "Help"].map((m) => html`<span>${m}</span>`)}</div>
      ${this.toolbar()}
      <div class="main">${this.dataPane()}${this.shelves()}${this.center()}${this.guide()}</div>
      ${this.sheets()}
      <div class="status"><span class="a">35 marks</span><span class="b">1 row by 1 column</span><span class="c">SUM(Area): 4,030,580,636</span>
        ${slice(999, 708, 367, 20, svg`<path d="M999.500 708v20M1126.500 708v20M1153.500 708v20M1180.500 708v20M1227.500 708v20M1298.500 708v20" stroke="#cbcbcb"/>
          <path d="M1236 714v7h1.200v-7zM1241.500 714v7l-4-3.500zM1257 714v7l-4-3.500zM1269.500 714v7l4-3.500zM1284.500 714v7l4-3.500zM1289 714v7h1.200v-7z" fill="#b5b5b5"/>
          <path d="M1307 713.500h11M1307 717.500h11M1307 721.500h11" stroke="#bcbcbc" stroke-width="3" stroke-dasharray="3 1"/><path d="M1328 712h11v6h-11z" fill="#bcbcbc"/><path d="M1328 721.500h11" stroke="#bcbcbc" stroke-width="3" stroke-dasharray="3 1"/><path d="M1349 712h11v11h-11z" fill="#666"/>`)}
      </div>
      ${this.taskbar()}`;
  }
}
